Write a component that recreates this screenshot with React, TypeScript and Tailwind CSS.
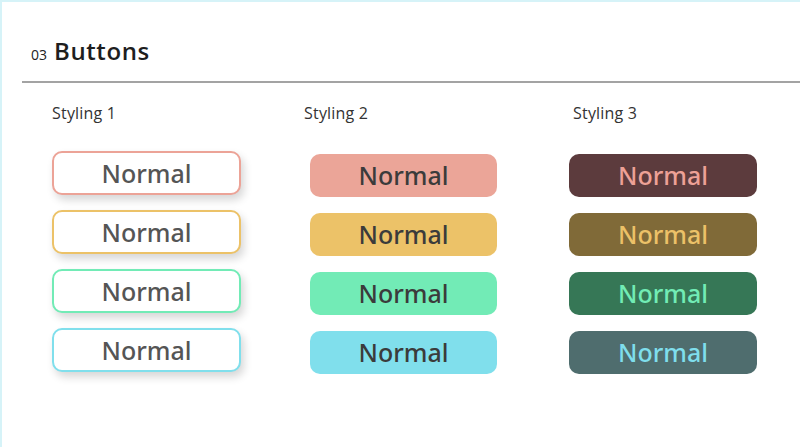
import * as React from "react";

const outline = [
  { border: "border-[#eca397]" },
  { border: "border-[#ecc268]" },
  { border: "border-[#72ebb6]" },
  { border: "border-[#80dfec]" },
];

const filled = ["bg-[#eba598]", "bg-[#ecc268]", "bg-[#72ebb6]", "bg-[#80dfec]"];

const dark = [
  { bg: "bg-[#5c3b3d]", text: "text-[#eda196]" },
  { bg: "bg-[#806a38]", text: "text-[#ecc168]" },
  { bg: "bg-[#367756]", text: "text-[#72ecb5]" },
  { bg: "bg-[#4f6d6e]", text: "text-[#7fdeec]" },
];

const label = "text-[16px] text-[#333] font-['Open_Sans',sans-serif] leading-none tracking-[0.2px]";
const btnText = "font-['Noto_Sans',sans-serif] text-[25px] font-medium leading-none";

export default function App() {
  return (
    <div className="w-[800px] h-[447px] bg-white border-l-2 border-t-2 border-[#d6f3f8] overflow-hidden">
      <div className="flex items-baseline gap-[7px] pl-[29px] pt-[31px] h-[79px]">
        <span className="text-[14px] text-[#222] font-['Open_Sans',sans-serif]">03</span>
        <span className="text-[24px] font-semibold text-[#1e1e1e] font-['Open_Sans',sans-serif] tracking-[0.6px]">Buttons</span>
      </div>
      <div className="ml-[20px] h-[2px] bg-[#a3a3a3]" />

      <div className="flex pl-[50px] pt-[22px]">
        <div className="w-[252px] flex flex-col">
          <div className={label}>Styling 1</div>
          <div className="mt-[30px] flex flex-col gap-[15px]">
            {outline.map((o, i) => (
              <div
                key={i}
                className={`w-[189px] h-[44px] rounded-[10px] border-2 ${o.border} bg-white flex items-center justify-center shadow-[3px_5px_8px_rgba(0,0,0,0.16)]`}
              >
                <span className={`${btnText} text-[#555]`}>Normal</span>
              </div>
            ))}
          </div>
        </div>

        <div className="w-[265px] flex flex-col">
          <div className={label}>Styling 2</div>
          <div className="mt-[33px] ml-[6px] flex flex-col gap-[16px]">
            {filled.map((bg, i) => (
              <div key={i} className={`w-[187px] h-[43px] rounded-[10px] ${bg} flex items-center justify-center`}>
                <span className={`${btnText} text-[#3b3b3b]`}>Normal</span>
              </div>
            ))}
          </div>
        </div>

        <div className="flex flex-col">
          <div className={`${label} ml-[4px]`}>Styling 3</div>
          <div className="mt-[33px] flex flex-col gap-[16px]">
            {dark.map((d, i) => (
              <div key={i} className={`w-[188px] h-[43px] rounded-[10px] ${d.bg} flex items-center justify-center`}>
                <span className={`${btnText} ${d.text}`}>Normal</span>
              </div>
            ))}
          </div>
        </div>
      </div>
    </div>
  );
}
